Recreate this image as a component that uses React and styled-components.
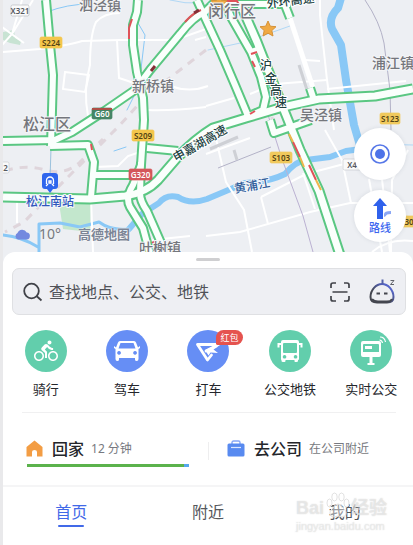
import React from 'react';
import styled, { createGlobalStyle } from 'styled-components';
import { MdDirectionsBike } from 'react-icons/md';

const GlobalStyle = createGlobalStyle`
  * { box-sizing: border-box; }
  body {
    margin: 0;
    background: #fff;
    font-family: "Noto Sans", "Noto Sans CJK SC", sans-serif;
    color: #24262b;
  }
  button, input { font: inherit; color: inherit; }
  button { border: 0; padding: 0; background: none; cursor: pointer; }
`;

const Page = styled.main`
  display: flex;
  flex-direction: column;
  min-height: 100vh;
  border-left: 3px solid #e9e9eb;
  overflow: hidden;
`;

const MapArea = styled.section`
  position: relative;
  height: 266px;
`;

const MapSvg = styled.svg`
  display: block;
  width: 100%;
  height: 100%;
  font-family: "Noto Sans", "Noto Sans CJK SC", sans-serif;
`;

const PlaceName = styled.text`
  font-size: ${(p) => (p.$large ? 16 : 14)}px;
  font-weight: 500;
  fill: #74767c;
  stroke: #f4f5f7;
  stroke-width: 2px;
  paint-order: stroke;
`;

const RoadName = styled.text`
  font-size: 12px;
  font-weight: 500;
  fill: #22423f;
  stroke: #fff;
  stroke-width: 2px;
  paint-order: stroke;
  text-anchor: middle;
`;

const BlueName = styled.text`
  font-size: 12px;
  font-weight: 500;
  fill: ${(p) => p.$fill};
  stroke: #f4f6fa;
  stroke-width: 2px;
  paint-order: stroke;
`;

const ShieldText = styled.text`
  font-size: 8px;
  font-weight: 600;
  text-anchor: middle;
  fill: ${(p) => p.$fill};
`;

const Weather = styled.div`
  position: absolute;
  left: 11px;
  bottom: 20px;
  display: flex;
  align-items: center;
  gap: 9px;
  font-size: 14px;
  line-height: 24px;
  color: #777a80;
`;

const MapBrand = styled.span`
  margin-left: 8px;
  font-size: 13px;
  font-weight: 700;
  color: #7c8596;
  text-shadow: 0 0 1px #fff, 0 0 2px #fff;
`;

const MapControls = styled.div`
  position: absolute;
  right: 7px;
  bottom: 24px;
  display: flex;
  flex-direction: column;
  gap: 10px;
`;

const RoundButton = styled.button`
  display: flex;
  flex-direction: column;
  align-items: center;
  justify-content: center;
  width: 52px;
  height: 52px;
  border-radius: 50%;
  background: #fff;
  box-shadow: 0 0 4px rgba(60, 70, 90, 0.12);
  font-size: 11px;
  font-weight: 500;
  line-height: 14px;
  color: #3b66ef;
`;

const Sheet = styled.section`
  position: relative;
  margin-top: -14px;
  padding-top: 6px;
  border-radius: 12px 12px 0 0;
  background: #fff;
`;

const Handle = styled.div`
  width: 24px;
  height: 3px;
  margin: 0 auto;
  border-radius: 2px;
  background: #cfcfd1;
`;

const SearchBox = styled.form`
  display: flex;
  align-items: center;
  height: 47px;
  margin: 7px 7px 0 9px;
  padding: 0 10px;
  border: 1px solid #dfe0e3;
  border-radius: 7px;
  background: #eeeff3;
`;

const SearchInput = styled.input`
  flex: 1;
  min-width: 0;
  margin: 0 6px;
  padding: 0;
  border: 0;
  outline: 0;
  background: none;
  font-size: 16px;
  line-height: 24px;
  &::placeholder { color: #505258; opacity: 1; }
`;

const IconButton = styled.button`
  display: flex;
  margin-left: ${(p) => p.$gap || 0}px;
`;

const Services = styled.div`
  display: grid;
  grid-template-columns: repeat(5, 1fr);
  padding: 15px 1px 0 2px;
`;

const Service = styled.button`
  display: flex;
  flex-direction: column;
  align-items: center;
  gap: 7px;
  font-size: 13px;
  line-height: 20px;
  white-space: nowrap;
`;

const Disc = styled.span`
  position: relative;
  display: flex;
  width: 42px;
  height: 42px;
  border-radius: 50%;
  background: ${(p) => (p.$blue ? '#668ef5' : '#62ceac')};
  color: #fff;
`;

const Badge = styled.span`
  position: absolute;
  left: 29px;
  top: 0;
  padding: 0 4px;
  border-radius: 8px 8px 8px 2px;
  background: #e5534f;
  font-size: 9px;
  line-height: 15px;
`;

const Divider = styled.hr`
  height: 1px;
  margin: 13px 17px 0 19px;
  border: 0;
  background: #f0f0f1;
`;

const Commutes = styled.div`
  display: flex;
  padding: 23px 17px 18px 23px;
`;

const Commute = styled.button`
  display: flex;
  flex: ${(p) => p.$grow};
  flex-direction: column;
  align-items: flex-start;
  text-align: left;
`;

const CommuteLine = styled.span`
  display: flex;
  align-items: center;
  height: 24px;
  white-space: nowrap;
`;

const CommuteName = styled.span`
  margin: 0 7px 0 9px;
  font-size: 16px;
  font-weight: 500;
`;

const CommuteNote = styled.span`
  font-size: 12px;
  color: #777980;
`;

const Separator = styled.span`
  width: 1px;
  height: 18px;
  margin: 6px 18px 0 19px;
  background: #eeeeef;
`;

const Traffic = styled.span`
  display: block;
  width: calc(100% - 1px);
  height: 3px;
  margin: 4px 0 0 1px;
  background: linear-gradient(90deg, #5bb24c 97%, #55a7ee 97%);
`;

const TabBar = styled.nav`
  position: relative;
  display: grid;
  grid-template-columns: repeat(3, 1fr);
  border-top: 2px solid #f5f5f6;
`;

const Tab = styled.a`
  display: flex;
  flex-direction: column;
  align-items: center;
  padding-top: 12px;
  font-size: 16px;
  line-height: 26px;
  text-decoration: none;
  color: ${(p) => (p.$active ? '#4169e8' : '#55575c')};
  &::after {
    content: "";
    width: 26px;
    height: 2px;
    border-radius: 1px;
    background: ${(p) => (p.$active ? '#4169e8' : 'transparent')};
  }
`;

const Watermark = styled.div`
  position: absolute;
  right: 26px;
  top: 5px;
  width: 91px;
  pointer-events: none;
  white-space: nowrap;
  color: rgba(255, 255, 255, 0.5);
  text-shadow: 0 0 1px rgba(150, 150, 150, 0.5);
  font-family: "Liberation Sans", "Noto Sans CJK SC", sans-serif;
`;

const WatermarkBrand = styled.div`
  display: flex;
  align-items: flex-end;
  justify-content: space-between;
  font-size: 18px;
  font-weight: 700;
  line-height: 24px;
`;

const WatermarkUrl = styled.div`
  font-size: 11px;
  line-height: 12px;
`;

const minorRoads = [
  'M2 52L40 49Q70 45 82 41L120 40L175 40L206 29',
  'M88 116Q83 90 90 65Q90 35 96 22Q104 13 120 13',
  'M117 40L119 78L137 84',
  'M65 72L89 75L85 92L63 89Z',
  'M148 110Q170 111 206 107',
  'M170 86Q190 93 208 86',
  'M2 45L12 34L22 0M12 34L33 0M2 27L24 43',
  'M95 167L118 166L128 156L140 152',
  'M17 198L17 223M91 198L93 252',
  'M320 0L320 15L327 80L334 130',
  'M250 94L275 84L327 80M305 60L320 61',
  'M327 89L406 81',
  'M214 130L226 182L244 210L252 252',
  'M206 236L240 232L310 212L350 203L413 203',
  'M325 130L342 160L351 203',
  'M261 197L306 174L344 164M261 197L268 224M303 173L315 209',
  'M206 154L250 138M206 106L234 98',
  'M195 40L206 37M228 74L247 116',
  'M369 179L382 252M382 179L390 252M408 150L392 180L391 252',
  'M372 252Q388 238 413 241M152 240L190 236',
];

const railways = [
  'M206 50L180 70L145 97L120 125L64 181L24 222L5 232',
  'M5 171Q25 164 45 170T80 162L103 139',
  'M232 20L258 75L276 130',
];

const freeways = [
  { d: 'M46 0L50 45L53 75L51 146' },
  { d: 'M3 141L55 140L72 132L103 112L135 90L150 70L180 34Q193 17 205 12L213 4L290 4' },
  { d: 'M138 0L137 12L133 25L133 45L137 72L143 98L144 120L141 165L133 185Q125 198 130 207L143 228L150 254' },
  { d: 'M141 162L140 193Q140 201 147 211L165 252' },
  { d: 'M50 146L88 145L94 162L91 197' },
  { d: 'M94 175L136 175' },
  { d: 'M147 148L178 151' },
  { d: 'M197 0L207 22L220 50L235 85L248 116' },
  { d: 'M227 8L231 17L251 52L261 77L266 97L263 110L247 117' },
  { d: 'M240 3L257 42L268 70L286 115L300 150L319 191L341 258', wide: true },
  { d: 'M283 0L290 18' },
  { d: 'M310 88L314 100' },
  { d: 'M270 120L274 133L311 120' },
  { d: 'M251 52L257 50' },
  { d: 'M3 197L90 199L125 196Q146 193 158 180L177 158Q195 139 213 128L246 118L283 107L319 99L375 96L413 89', wide: true },
];

const shields = [
  { x: 11, y: 5, w: 18, label: 'X321', bg: '#fafafa', fg: '#55585f', line: '#b9bbc0' },
  { x: 40, y: 37, w: 22, label: 'S224', bg: '#f4c64b', fg: '#544415' },
  { x: 92, y: 108, w: 20, label: 'G60', bg: '#468466', fg: '#fff', top: '#ad4e46' },
  { x: 132, y: 130, w: 22, label: 'S209', bg: '#f4c64b', fg: '#544415' },
  { x: 129, y: 169, w: 23, label: 'G320', bg: '#d4565a', fg: '#fff' },
  { x: 380, y: 113, w: 20, label: 'S123', bg: '#f0c95d', fg: '#544415' },
  { x: 270, y: 152, w: 22, label: 'S103', bg: '#f0c95d', fg: '#544415' },
  { x: 343, y: 159, w: 18, label: 'X4', bg: '#fafafa', fg: '#55585f', line: '#c9cbd0' },
  { x: 401, y: 216, w: 16, label: '30', bg: '#f0c95d', fg: '#544415' },
  { x: 2, y: 162, w: 7, label: '2', bg: '#fafafa', fg: '#55585f', line: '#c9cbd0' },
];

const starPath = 'M0 -8L2.3 -2.8L8 -2.3L3.8 1.6L5 7L0 4.2L-5 7L-3.8 1.6L-8 -2.3L-2.3 -2.8Z';

function CityMap() {
  return (
    <MapSvg viewBox="3 0 410 266" preserveAspectRatio="xMidYMid slice" role="img" aria-label="地图">
      <rect x="-400" width="1300" height="266" fill="#edeff3" />
      <path d="M3 32L14 30L15 38L21 41L20 45L10 43L3 40Z" fill="#c8e3d3" />
      <path d="M59 203L91 201L90 232L63 229Z" fill="#c3e7cd" />
      <g fill="none" stroke="#89c8f6" strokeLinecap="round" strokeLinejoin="round">
        <path d="M341 -2L338 8Q328 18 332 29L341 45L346 80L354 125L361 149" strokeWidth="8" />
        <path d="M361 149L346 151L330 157L306 160Q296 161 285 174Q269 182 245 183L207 199Q190 205 178 197Q166 194 159 203L142 214L129 229" strokeWidth="6" />
        <path d="M129 229Q111 231 99 222L80 227L60 223L39 224L39 254M3 235Q22 237 38 247" strokeWidth="3" />
        <path d="M138 23L145 35L141 69M140 84L127 110M126 147L114 151M47 12Q67 4 90 4" strokeWidth="1" />
        <path d="M208 50L245 42L290 26M170 0Q185 4 200 3M366 144L413 145" strokeWidth="1" opacity=".6" />
      </g>
      <g fill="none" stroke="#fff" strokeWidth="2">
        {minorRoads.map((d) => <path key={d} d={d} />)}
      </g>
      <path d="M290 18L313 88" fill="none" stroke="#fff" strokeWidth="5" />
      <g fill="none" stroke="#dfd5db" strokeWidth="3" strokeDasharray="8 7">
        {railways.map((d) => <path key={d} d={d} />)}
      </g>
      <g fill="none" stroke="#b3b2c7" strokeWidth="1">
        <path d="M365 0Q380 22 384 43L390 90L391 130M218 168L271 147" />
        <path d="M262 96L282 159L303 216L313 252" stroke="#bbb1d2" />
        <path d="M234 150L237 160M210 149L238 137M299 65L307 90" stroke="#ced0d5" strokeWidth="3" />
        <path d="M51 148L50 180" stroke="#9bc2dd" />
      </g>
      <g fill="none" stroke="#5ac782" strokeLinejoin="round">
        {freeways.map((r) => <path key={r.d} d={r.d} strokeWidth={r.wide ? 11 : 10} />)}
      </g>
      <g fill="none" stroke="#fafffc" strokeLinejoin="round">
        {freeways.map((r) => <path key={r.d} d={r.d} strokeWidth={r.wide ? 7 : 6} />)}
      </g>
      <g fill="none" strokeWidth="2">
        <path d="M132 19L129 28L129 39M185 22Q193 13 201 10M251 54L257 52M252 61L255 67M250 114L255 111M91 144L92 150M309 165L316 180M293 142L300 157" stroke="#df5359" />
        <path d="M226 1L237 1L239 5M152 243L156 241" stroke="#df5359" />
        <path d="M151 71L155 66M194 13L199 10" stroke="#842f36" strokeWidth="3" />
        <path d="M289 134L293 142M300 157L304 167M316 180L321 190" stroke="#efb64b" />
      </g>
      <g fill="#f0a943" stroke="#d69237" strokeWidth="1">
        <path d={starPath} transform="translate(219 3)" />
        <path d={starPath} transform="translate(268 29)" />
      </g>

      <PlaceName x="79" y="10">泗泾镇</PlaceName>
      <PlaceName x="132" y="91">新桥镇</PlaceName>
      <PlaceName x="23" y="130" $large>松江区</PlaceName>
      <PlaceName x="208" y="17" $large>闵行区</PlaceName>
      <PlaceName x="372" y="68">浦江镇</PlaceName>
      <PlaceName x="300" y="120">吴泾镇</PlaceName>
      <PlaceName x="139" y="253">叶榭镇</PlaceName>

      <RoadName transform="translate(291 5) rotate(-7)">外环高速</RoadName>
      <RoadName x="266 271 276 281" y="70 83 95 107">沪金高速</RoadName>
      <RoadName transform="translate(202 147) rotate(-30)">申嘉湖高速</RoadName>
      <BlueName $fill="#315f9c" transform="translate(235 193) rotate(-10)">黄浦江</BlueName>
      <BlueName $fill="#3058bd" x="26" y="206">松江南站</BlueName>

      <path d="M45 173H55Q58 173 58 176V186Q58 189 55 189H53L50 193L47 189H45Q42 189 42 186V176Q42 173 45 173Z" fill="#2f66ed" />
      <path d="M46.5 184V180.5A3.5 3.5 0 0 1 53.500 180.500V184M49 181H51V183H49ZM46 186L48 184M54 186L52 184" fill="none" stroke="#fff" strokeWidth="1.300" />

      {shields.map((s) => (
        <g key={s.label}>
          <rect x={s.x} y={s.y} width={s.w} height="11" rx="1.5" fill={s.bg} stroke={s.line || s.bg} strokeWidth=".7" />
          {s.top && <rect x={s.x} y={s.y} width={s.w} height="2" fill={s.top} />}
          <ShieldText x={s.x + s.w / 2} y={s.y + 9} $fill={s.fg}>{s.label}</ShieldText>
        </g>
      ))}
    </MapSvg>
  );
}

const CloudIcon = () => (
  <svg width="16" height="12" viewBox="0 0 16 12" aria-hidden="true">
    <path d="M4 11.500A3.500 3.500 0 0 1 3.500 5A5 5 0 0 1 12.700 4.500A3.500 3.500 0 0 1 12 11.500Z" fill="#7389df" />
  </svg>
);

const LocateIcon = () => (
  <svg width="22" height="22" viewBox="0 0 22 22" aria-hidden="true">
    <circle cx="11" cy="11" r="9" fill="none" stroke="#5778e8" strokeWidth="1.700" />
    <circle cx="11" cy="11" r="5" fill="#4e73e8" />
  </svg>
);

const RouteIcon = () => (
  <svg width="28" height="24" viewBox="0 0 28 24" aria-hidden="true">
    <path d="M18 20V17Q18 14 25 14V17Q20 17 20 19Z" fill="#8ba7f4" />
    <path d="M14 1L21 9H17V22H11V9H7Z" fill="#2f61ec" />
  </svg>
);

const SearchIcon = () => (
  <svg width="20" height="20" viewBox="0 0 20 20" fill="none" stroke="#404248" strokeWidth="1.800" aria-hidden="true">
    <circle cx="8.500" cy="9" r="7.300" />
    <path d="M13.500 14L18.500 18.500" />
  </svg>
);

const ScanIcon = () => (
  <svg width="20" height="20" viewBox="0 0 20 20" fill="none" stroke="#414349" strokeWidth="1.700" aria-hidden="true">
    <path d="M1 6V3Q1 1 3 1H6M14 1H17Q19 1 19 3V6M19 14V17Q19 19 17 19H14M6 19H3Q1 19 1 17V14M2.500 10H17.500" />
  </svg>
);

const RobotIcon = () => (
  <svg width="26" height="26" viewBox="0 0 26 26" fill="none" aria-hidden="true">
    <defs>
      <linearGradient id="robot" x1="0" y1="1" x2="1" y2="0">
        <stop offset=".35" stopColor="#44464f" />
        <stop offset=".8" stopColor="#5565c8" />
      </linearGradient>
    </defs>
    <path d="M13 5C7 5 1.500 11 1.500 18C1.500 22 4 23.500 8 23.500H18C22 23.500 24.500 22 24.500 18C24.500 11 19 5 13 5Z" stroke="url(#robot)" strokeWidth="2" />
    <path d="M13.500 5V0.500" stroke="#5360a6" strokeWidth="2" />
    <path d="M3 20Q5 22.500 9 22.500H18Q22 22.500 23 20" stroke="#44464f" strokeWidth="2" />
    <path d="M7.500 14.500H11M15 14.500H18.500" stroke="#45474f" strokeWidth="2" />
    <path d="M21.500 1.500H25L21.500 5.500H25" stroke="#606269" strokeWidth="1" />
  </svg>
);

const GlyphSvg = ({ children }) => (
  <svg width="42" height="42" viewBox="0 0 42 42" fill="#fff" aria-hidden="true">{children}</svg>
);

const BikeGlyph = () => (
  <GlyphSvg><MdDirectionsBike x="9" y="9" size="24" /></GlyphSvg>
);

const CarGlyph = () => (
  <GlyphSvg>
    <path fillRule="evenodd" d="M14 11H28Q29.500 11 30 12.500L32 17.500L34 16V18L32.500 19V29Q32.500 31 30.700 31Q29 31 29 29.500V28H13V29.500Q13 31 11.300 31Q9.500 31 9.500 29V19L8 18V16L10 17.500L12 12.500Q12.500 11 14 11ZM14.500 13L12.500 18.500H29.500L27.500 13ZM13 21A1.900 1.900 0 1 0 13.100 21ZM29 21A1.900 1.900 0 1 0 29.100 21Z" />
  </GlyphSvg>
);

const TaxiGlyph = () => (
  <GlyphSvg>
    <path d="M24.500 25L20.500 30L10.500 14.500H31.500L19 21" fill="none" stroke="#fff" strokeWidth="2.800" strokeLinejoin="round" strokeLinecap="round" />
    <path d="M31 14L30.500 17L26.500 19.500L31 23L23.500 22.500L21.500 25.500L18 20Z" />
  </GlyphSvg>
);

const BusGlyph = () => (
  <GlyphSvg>
    <path fillRule="evenodd" d="M14 10H28Q30 10 30 12V29Q30 30 29 30V31Q29 32 27.500 32H26Q25.500 32 25.500 31V30H16.500V31Q16.500 32 15.500 32H14Q12.500 32 12.500 31V30Q12 30 12 29V12Q12 10 14 10ZM15 13Q14 13 14 14V22Q14 23 15 23H27Q28 23 28 22V14Q28 13 27 13ZM15.500 25A1.800 1.800 0 1 0 15.600 25ZM26.500 25A1.800 1.800 0 1 0 26.600 25Z" />
    <path d="M12 14H9.500V17.500M30 14H32.500V17.500" fill="none" stroke="#fff" strokeWidth="2" />
  </GlyphSvg>
);

const StopGlyph = () => (
  <GlyphSvg>
    <path fillRule="evenodd" d="M13 11H29Q31 11 31 13V25Q31 27 29 27H13Q11 27 11 25V13Q11 11 13 11ZM14 14Q13 14 13 15V22H29V15Q29 14 28 14Z" />
    <rect x="15" y="16" width="7" height="3" />
    <path d="M19.500 27H22.500V33H24.500V35H17.500V33H19.500Z" />
    <path d="M29.500 10Q32 10 32.500 13M30 7Q34.500 7 35.500 12" fill="none" stroke="#fff" strokeWidth="1.200" />
  </GlyphSvg>
);

const HomeIcon = () => (
  <svg width="17" height="17" viewBox="0 0 17 17" aria-hidden="true">
    <path d="M8.500 .5L16.500 7V16.500H11V12Q11 10 8.500 10Q6 10 6 12V16.500H.5V7Z" fill="#f39d44" />
  </svg>
);

const WorkIcon = () => (
  <svg width="18" height="17" viewBox="0 0 18 17" aria-hidden="true">
    <rect x="5" y="1" width="8" height="5" rx="1.500" fill="none" stroke="#86a6f6" strokeWidth="1.400" />
    <rect x=".5" y="3.500" width="17" height="13" rx="1.500" fill="#588af0" />
    <path d="M4 7.500H14" stroke="#dce7ff" strokeWidth="1.200" />
  </svg>
);

const PawIcon = () => (
  <svg width="24" height="28" viewBox="0 0 24 28" fill="#fff" fillOpacity=".4" stroke="#e2e2e2" aria-hidden="true">
    <ellipse cx="3.500" cy="11" rx="2.500" ry="4" />
    <ellipse cx="8.500" cy="5" rx="2.700" ry="4" />
    <ellipse cx="15.500" cy="5" rx="2.700" ry="4" />
    <ellipse cx="20.500" cy="11" rx="2.500" ry="4" />
    <path d="M12 12Q15 12 17 16Q22 20 19 24Q17 26 12 24Q7 26 5 24Q2 20 7 16Q9 12 12 12Z" />
  </svg>
);

const services = [
  { label: '骑行', Glyph: BikeGlyph },
  { label: '驾车', Glyph: CarGlyph, blue: true },
  { label: '打车', Glyph: TaxiGlyph, blue: true, badge: '红包' },
  { label: '公交地铁', Glyph: BusGlyph },
  { label: '实时公交', Glyph: StopGlyph },
];

export default function App() {
  return (
    <Page>
      <GlobalStyle />
      <MapArea>
        <CityMap />
        <Weather>
          <CloudIcon />
          <span>10°</span>
          <MapBrand>高德地图</MapBrand>
        </Weather>
        <MapControls>
          <RoundButton type="button" aria-label="定位"><LocateIcon /></RoundButton>
          <RoundButton type="button"><RouteIcon />路线</RoundButton>
        </MapControls>
      </MapArea>

      <Sheet>
        <Handle />
        <SearchBox role="search" onSubmit={(e) => e.preventDefault()}>
          <SearchIcon />
          <SearchInput type="text" aria-label="搜索" placeholder="查找地点、公交、地铁" />
          <IconButton type="button" aria-label="扫一扫"><ScanIcon /></IconButton>
          <IconButton type="button" aria-label="语音助手" $gap={19}><RobotIcon /></IconButton>
        </SearchBox>

        <Services>
          {services.map(({ label, Glyph, blue, badge }) => (
            <Service type="button" key={label}>
              <Disc $blue={blue}>
                <Glyph />
                {badge && <Badge>{badge}</Badge>}
              </Disc>
              {label}
            </Service>
          ))}
        </Services>

        <Divider />

        <Commutes>
          <Commute type="button" $grow={163}>
            <CommuteLine>
              <HomeIcon />
              <CommuteName>回家</CommuteName>
              <CommuteNote>12 分钟</CommuteNote>
            </CommuteLine>
            <Traffic />
          </Commute>
          <Separator />
          <Commute type="button" $grow={169}>
            <CommuteLine>
              <WorkIcon />
              <CommuteName>去公司</CommuteName>
              <CommuteNote>在公司附近</CommuteNote>
            </CommuteLine>
          </Commute>
        </Commutes>
      </Sheet>

      <TabBar>
        <Tab href="#home" $active aria-current="page">首页</Tab>
        <Tab href="#nearby">附近</Tab>
        <Tab href="#mine">我的</Tab>
        <Watermark aria-hidden="true">
          <WatermarkBrand><span>Bai</span><PawIcon /><span>经验</span></WatermarkBrand>
          <WatermarkUrl>jingyan.baidu.com</WatermarkUrl>
        </Watermark>
      </TabBar>
    </Page>
  );
}
